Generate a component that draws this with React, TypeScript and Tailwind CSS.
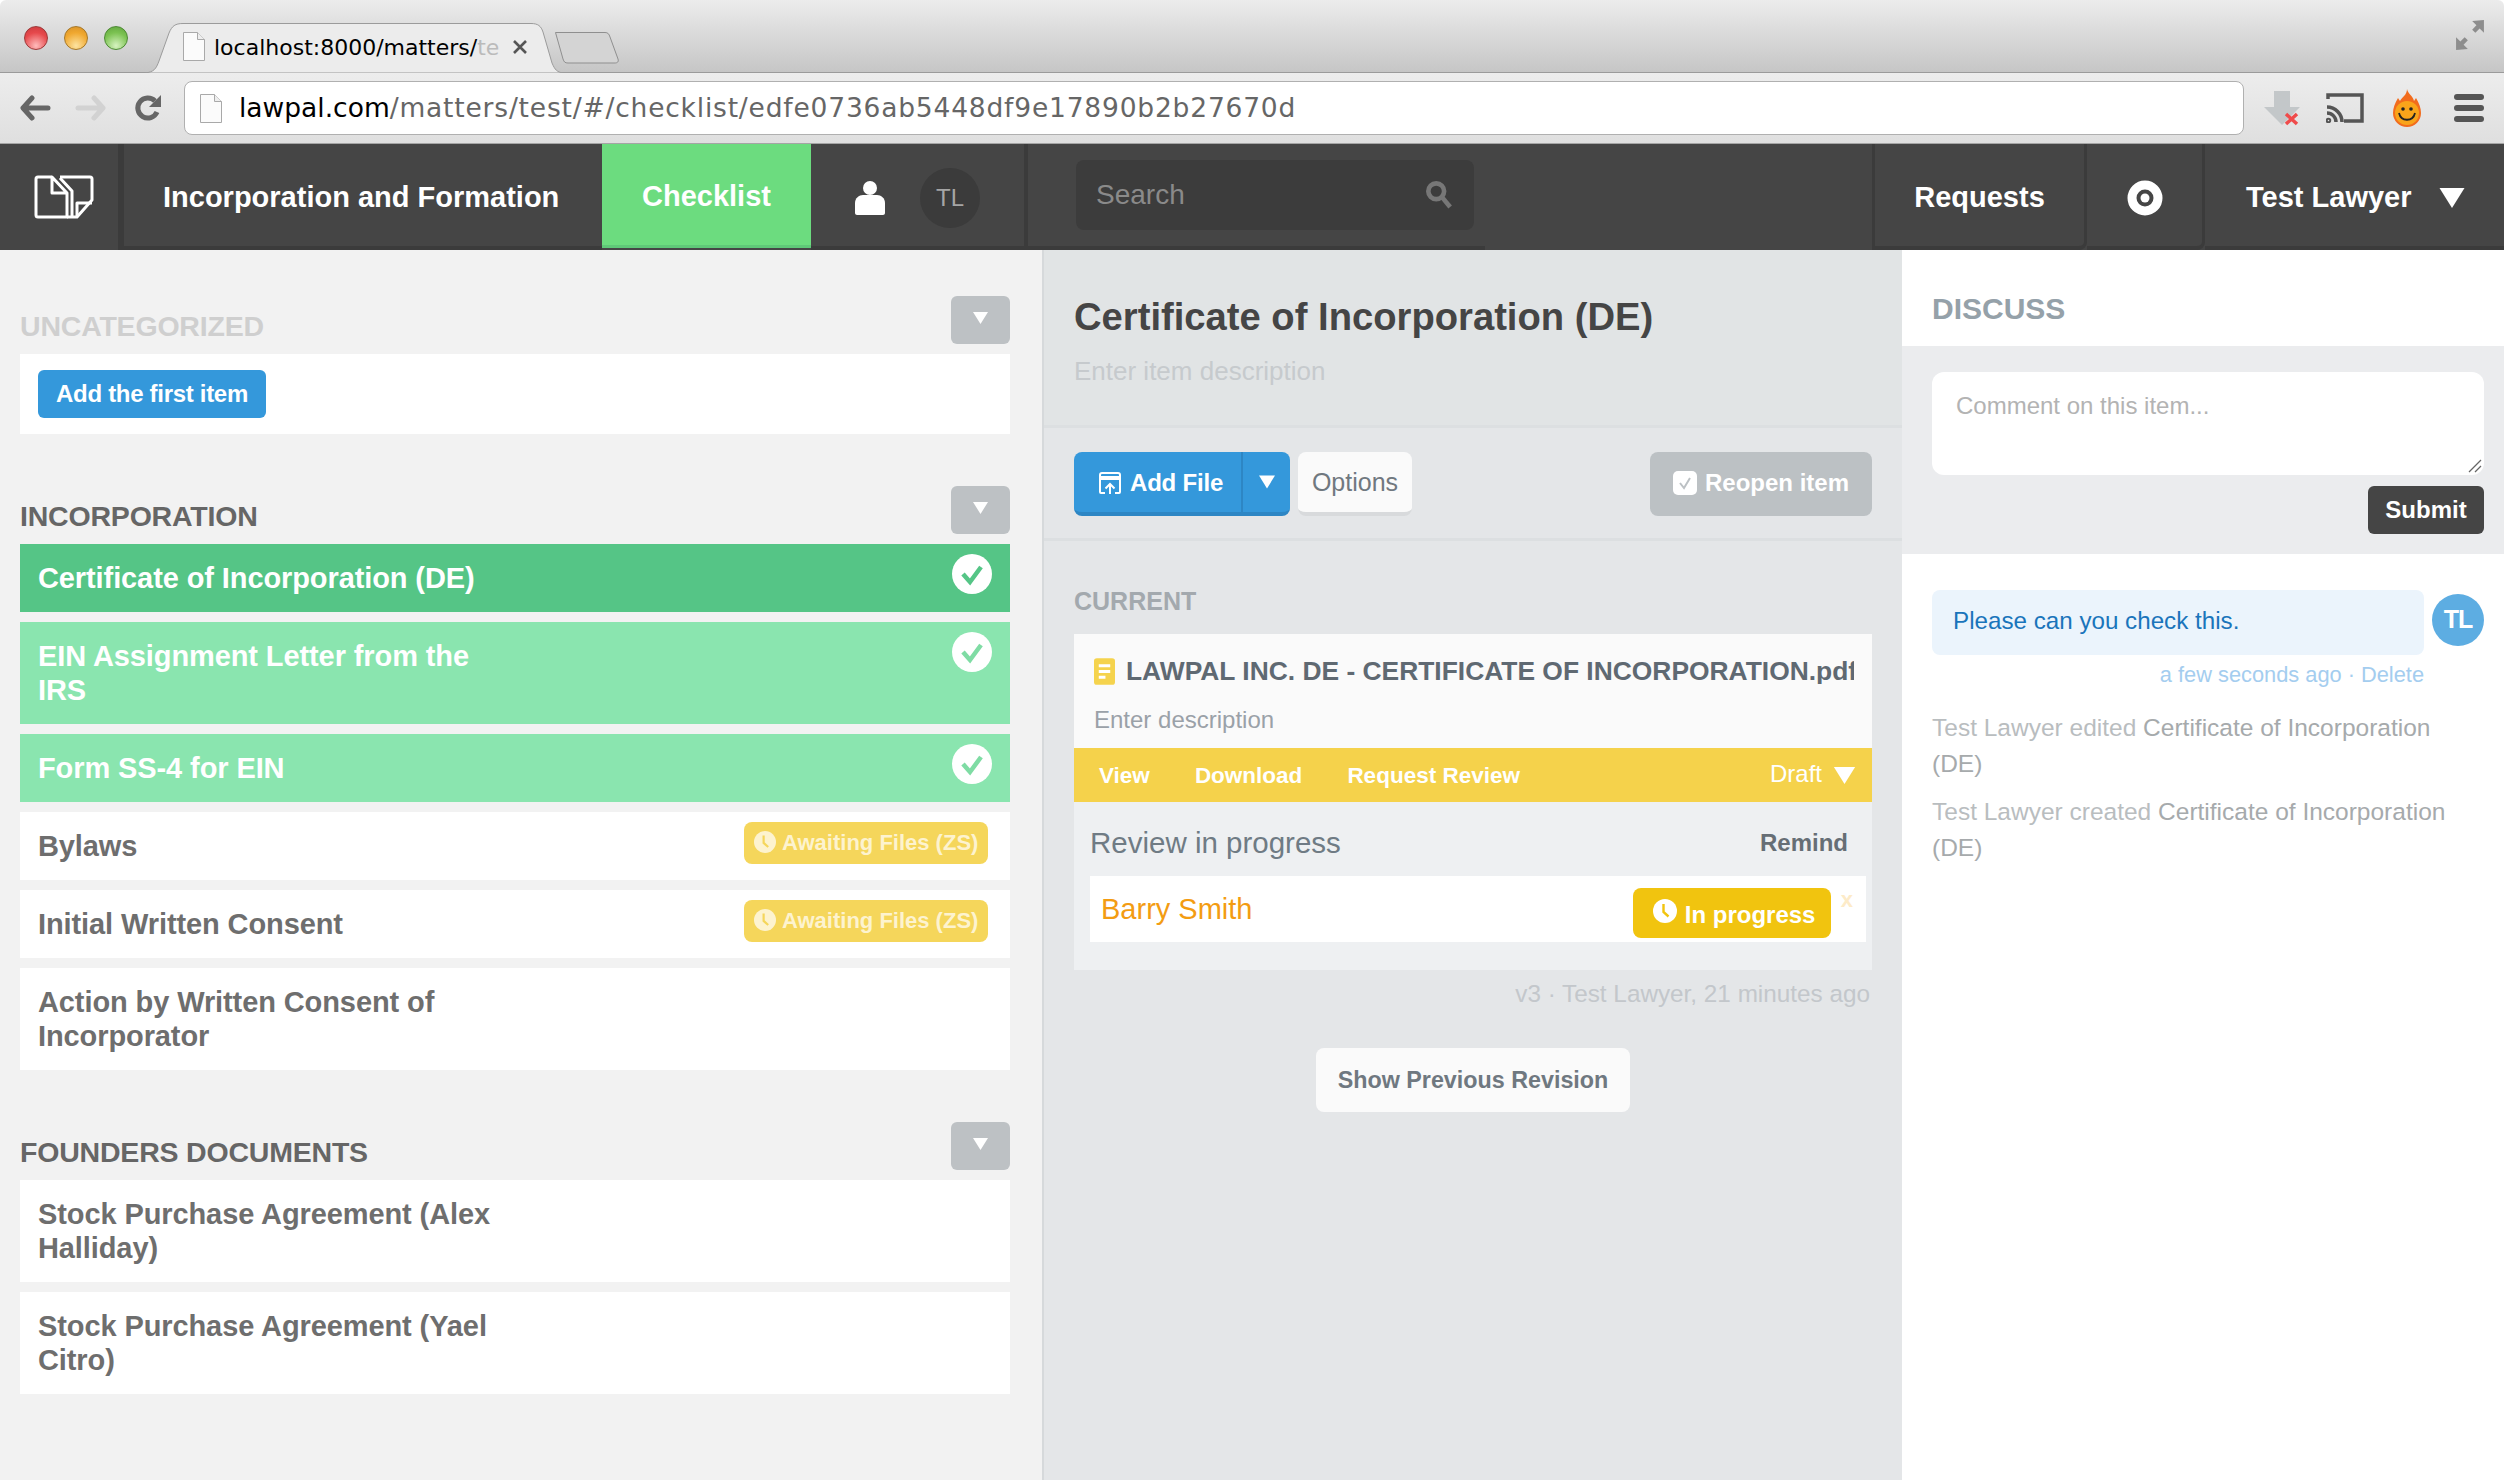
import React from "react";

const Caret = ({ className }: { className: string }) => (
  <svg viewBox="0 0 10 8" className={className} fill="currentColor">
    <path d="M0 0h10L5 8z" />
  </svg>
);

const PageIcon = ({ className }: { className: string }) => (
  <svg viewBox="0 0 22 29" className={className}>
    <path d="M.5.5h14l7 7v21H.5z" fill="#fbfbfb" stroke="#a9a9a9" />
    <path d="M14.5.5v7h7" fill="#eee" stroke="#a9a9a9" />
  </svg>
);

const ClockIcon = ({ className, hand }: { className: string; hand: string }) => (
  <svg viewBox="0 0 24 24" className={className}>
    <circle cx="12" cy="12" r="12" fill="currentColor" />
    <path d="M10.5 5v8l5 4.5" fill="none" stroke={hand} strokeWidth="2.4" />
  </svg>
);

const CheckCircle = ({ color }: { color: string }) => (
  <svg viewBox="0 0 40 40" className="w-10 h-10 shrink-0">
    <circle cx="20" cy="20" r="20" fill="#fff" />
    <path d="M11 20l7 8 11-15" fill="none" stroke={color} strokeWidth="4.5" />
  </svg>
);

function BrowserChrome() {
  return (
    <div className="font-['DejaVu_Sans',sans-serif]">
      <div className="h-[73px] flex bg-gradient-to-b from-[#ececec] to-[#c6c6c6] border-b border-[#9b9b9b] rounded-t-md">
        <div className="flex gap-4 pl-6 pt-[26px]">
          <span className="w-6 h-6 rounded-full border border-[#9c3a3a] bg-[radial-gradient(circle_at_50%_85%,#fbb_0%,#e6494c_60%,#c93a3d_100%)]" />
          <span className="w-6 h-6 rounded-full border border-[#a5782a] bg-[radial-gradient(circle_at_50%_85%,#fde3a0_0%,#f0a830_60%,#d58f26_100%)]" />
          <span className="w-6 h-6 rounded-full border border-[#4d8a35] bg-[radial-gradient(circle_at_50%_85%,#d6f3c0_0%,#7cc252_60%,#5ea33c_100%)]" />
        </div>
        <div className="relative ml-[17px] mt-[23px] w-[418px] h-[50px] flex items-center pl-[38px]">
          <svg viewBox="0 0 418 50" className="absolute inset-0 w-full h-full">
            <path d="M0 50C9 49 11 46 14 38L24 10C27 3 30 .5 38 .5H386C393 .5 396 3 398 9L407 40C410 47 412 49 418 50z" fill="#ececec" stroke="#9b9b9b" />
          </svg>
          <PageIcon className="relative w-[22px] h-[29px] shrink-0 mb-[3px]" />
          <span className="relative ml-[9px] text-[22px] leading-none text-black w-[290px] overflow-hidden whitespace-nowrap">
            localhost:8000/matters/<span className="text-[#bbb]">te</span>
          </span>
          <svg viewBox="0 0 14 14" className="relative w-[14px] h-[14px] ml-[9px] mb-[2px]">
            <path d="M1 1l12 12M13 1L1 13" stroke="#555" strokeWidth="2.6" />
          </svg>
        </div>
        <svg viewBox="0 0 64 32" className="w-16 h-8 -ml-[8px] mt-[32px]">
          <path d="M.5.5H50C53 .5 54 2 55 5L63 27C64 30 62 31 60 31H13C10 31 9 30 8 27z" fill="#d4d4d4" stroke="#8f8f8f" />
        </svg>
        <svg viewBox="0 0 28 28" className="w-[30px] h-[30px] ml-auto mr-[19px] mt-[20px]" fill="#8d8d8d">
          <path d="M27 0v12l-4-4-4 4-3-3 4-4-4-4zM1 28V16l4 4 4-4 3 3-4 4 4 4z" />
        </svg>
      </div>
      <div className="h-[71px] flex items-center bg-gradient-to-b from-[#ededed] to-[#dfdfdf] border-b border-[#a5a5a5]">
        <svg viewBox="0 0 31 26" className="w-[31px] h-[26px] ml-5" fill="none" stroke="#666" strokeWidth="5" strokeLinecap="round" strokeLinejoin="round">
          <path d="M12 3L3 13l9 10M4 13h24" />
        </svg>
        <svg viewBox="0 0 31 26" className="w-[31px] h-[26px] ml-6" fill="none" stroke="#d2d2d2" strokeWidth="5" strokeLinecap="round" strokeLinejoin="round">
          <path d="M19 3l9 10-9 10M3 13h24" />
        </svg>
        <svg viewBox="0 0 28 28" className="w-7 h-7 ml-7" fill="none">
          <path d="M23 18a10 10 0 1 1-2-11" stroke="#666" strokeWidth="5" />
          <path d="M27 1v12H15z" fill="#666" />
        </svg>
        <div className="w-[2060px] h-[54px] ml-[22px] rounded-lg bg-white border border-[#b0b0b0] flex items-center pl-[15px]">
          <PageIcon className="w-[22px] h-[29px]" />
          <span className="ml-[17px] text-[26.5px] leading-none whitespace-nowrap text-[#666] tracking-[0.8px]">
            <span className="text-black tracking-normal">lawpal.com</span>/matters/test/#/checklist/edfe0736ab5448df9e17890b2b27670d
          </span>
        </div>
        <svg viewBox="0 0 38 36" className="w-[38px] h-9 ml-[19px]">
          <path d="M11 1h16v16h10L19 35 1 17h10z" fill="#c3c7c9" />
          <path d="M23 24l11 10M34 24L23 34" stroke="#ef4b4b" strokeWidth="3.5" />
        </svg>
        <svg viewBox="0 0 38 30" className="w-[38px] h-[30px] ml-[25px]" fill="none" stroke="#555" strokeWidth="3.5">
          <path d="M2 6V2h34v26H18" />
          <path d="M1 14a15 15 0 0 1 15 15M1 20a9 9 0 0 1 9 9" />
          <circle cx="2.5" cy="27.5" r="1" />
        </svg>
        <svg viewBox="0 0 28 38" className="w-7 h-[38px] ml-[29px]">
          <path d="M14 0c1 5 6 7 7 12l2-3c3 5 5 10 5 15a14 14 0 0 1-28 0c0-5 2-10 5-15l2 3c2-4 7-6 7-12z" fill="#f26c1d" />
          <circle cx="14" cy="24" r="12" fill="#f9a41a" />
          <circle cx="10" cy="20" r="1.8" fill="#222" />
          <circle cx="18" cy="20" r="1.8" fill="#222" />
          <path d="M6 24c2 9 14 9 16 0" fill="none" stroke="#222" strokeWidth="1.8" />
        </svg>
        <div className="w-[30px] ml-[33px] flex flex-col gap-[5px]">
          <span className="h-[6px] rounded-full bg-[#555]" />
          <span className="h-[6px] rounded-full bg-[#555]" />
          <span className="h-[6px] rounded-full bg-[#555]" />
        </div>
      </div>
    </div>
  );
}

function TopNav() {
  const cell = "h-[106px] flex items-center pt-[6px] border-b-4 border-[#3b3b3b]";
  return (
    <div className="h-[106px] flex bg-[#454545] text-white font-bold text-[29px]">
      <div className="w-[118px] h-[106px] flex items-center pl-[34px]">
        <svg viewBox="-2 -2 60 44" className="w-[60px] h-11" fill="none" stroke="#fff" strokeWidth="3" strokeLinejoin="round">
          <path d="M16 0H2Q0 0 0 2V38Q0 40 2 40H31V16L16 0V16H31" />
          <path d="M24 0H54Q56 0 56 2V23L41 40H31" />
          <path d="M24 1L36 14V40" />
          <path d="M41 40V26H56" />
        </svg>
      </div>
      <div className={`${cell} w-[484px] border-l-[6px] pl-[39px]`}>Incorporation and Formation</div>
      <div className="w-[209px] h-[104px] flex items-center justify-center pt-[5px] bg-[#6cdc7f] border-b-[3px] border-[#5fc878]">Checklist</div>
      <div className={`${cell} w-[217px] border-r-4 pl-[44px]`}>
        <svg viewBox="0 0 30 34" className="w-[30px] h-[34px]" fill="#fff">
          <circle cx="15" cy="7" r="7" />
          <path d="M0 32V22c0-5 4-8 8-8h14c4 0 8 3 8 8v10c0 1-1 2-2 2H2c-1 0-2-1-2-2z" />
        </svg>
        <span className="ml-[35px] w-[60px] h-[60px] rounded-full bg-[#3b3b3b] text-[#a5a5a5] text-[24px] font-normal flex items-center justify-center">TL</span>
      </div>
      <div className="h-[106px] w-[457px] flex pl-[48px] pt-4 border-b-4 border-[#3b3b3b]">
        <div className="w-[398px] h-[70px] rounded-lg bg-[#3c3c3c] flex items-center justify-between pl-5 pr-[22px] font-normal text-[#8a8a8a] text-[28px]">
          Search
          <svg viewBox="0 0 28 30" className="w-[26px] h-7" fill="none" stroke="#777" strokeWidth="5">
            <circle cx="11" cy="11" r="8.5" />
            <path d="M17 17l9 11" />
          </svg>
        </div>
      </div>
      <div className="w-[387px]" />
      <div className={`${cell} w-[215px] border-l-[3px] border-r-[3px] justify-center rounded-br-lg`}>Requests</div>
      <div className={`${cell} w-[118px] border-r-[3px] justify-center rounded-br-lg`}>
        <svg viewBox="0 0 36 36" className="w-9 h-9">
          <circle cx="18" cy="18" r="13" fill="none" stroke="#fff" strokeWidth="9" />
          <circle cx="18" cy="18" r="4.5" fill="#fff" />
        </svg>
      </div>
      <div className={`${cell} flex-1 pl-[41px]`}>
        Test Lawyer
        <Caret className="w-[26px] h-[20px] ml-7" />
      </div>
    </div>
  );
}

function SectionHead({ title, muted }: { title: string; muted?: boolean }) {
  return (
    <div className="flex items-end justify-between h-12 mb-[10px]">
      <h2 className={`text-[28.5px] font-bold leading-none tracking-[-0.2px] mb-1 ${muted ? "text-[#cfcfcf]" : "text-[#666]"}`}>{title}</h2>
      <button className="w-[59px] h-12 rounded-md bg-[#bdc1c4] text-white flex items-center justify-center pb-1">
        <Caret className="w-[17px] h-3" />
      </button>
    </div>
  );
}

function Row({ label, tone, badge }: { label: string; tone?: "active" | "done"; badge?: boolean }) {
  const bg = tone === "active" ? "bg-[#55c586] text-white" : tone === "done" ? "bg-[#8ae5af] text-white" : "bg-white text-[#6e6e6e]";
  return (
    <div className={`flex justify-between pl-[18px] pr-[18px] py-[17px] min-h-[68px] text-[29px] leading-[34px] font-bold ${bg}`}>
      <span className="max-w-[460px] tracking-[-0.1px]">{label}</span>
      {tone && <span className="-my-[7px]"><CheckCircle color={tone === "active" ? "#55c586" : "#7fdca4"} /></span>}
      {badge && (
        <span className="-my-[7px] mr-1 h-[42px] w-[244px] rounded-lg bg-[#f5d65b] text-[#fdf3cf] text-[22px] leading-none flex items-center pl-[10px] gap-[6px] whitespace-nowrap">
          <ClockIcon className="w-[22px] h-[22px] shrink-0 mb-[2px]" hand="#f5d65b" />
          Awaiting Files (ZS)
        </span>
      )}
    </div>
  );
}

function LeftPanel() {
  return (
    <div className="w-[1042px] shrink-0 bg-[#f2f2f2] pl-5 pr-8 pt-[46px] flex flex-col gap-[52px]">
      <section>
        <SectionHead title="UNCATEGORIZED" muted />
        <div className="bg-white h-20 pl-[18px] pt-4">
          <button className="h-12 w-[228px] rounded-md bg-[#3498db] text-white font-bold text-[24px] tracking-[-0.3px]">Add the first item</button>
        </div>
      </section>
      <section>
        <SectionHead title="INCORPORATION" />
        <div className="flex flex-col gap-[10px]">
          <Row label="Certificate of Incorporation (DE)" tone="active" />
          <Row label="EIN Assignment Letter from the IRS" tone="done" />
          <Row label="Form SS-4 for EIN" tone="done" />
          <Row label="Bylaws" badge />
          <Row label="Initial Written Consent" badge />
          <Row label="Action by Written Consent of Incorporator" />
        </div>
      </section>
      <section>
        <SectionHead title="FOUNDERS DOCUMENTS" />
        <div className="flex flex-col gap-[10px]">
          <Row label="Stock Purchase Agreement (Alex Halliday)" />
          <Row label="Stock Purchase Agreement (Yael Citro)" />
        </div>
      </section>
    </div>
  );
}

function CenterPanel() {
  return (
    <div className="w-[860px] shrink-0 bg-[#e4e6e8] border-l-2 border-[#d6d9db] flex flex-col">
      <div className="h-[178px] shrink-0 bg-[#e1e4e5] border-b-[3px] border-[#dcdfe1] pl-[30px] pt-[44px]">
        <h1 className="text-[38.2px] leading-[46px] font-bold text-[#454545]">Certificate of Incorporation (DE)</h1>
        <p className="mt-4 text-[26px] leading-[30px] text-[#c6cacd]">Enter item description</p>
      </div>
      <div className="h-[113px] shrink-0 border-b-[3px] border-[#dcdfe1] pl-[30px] pr-[30px] flex items-start pt-6">
        <div className="flex h-16 rounded-lg bg-[#3498db] border-b-4 border-[#2d86c4] text-white text-[24px] font-bold">
          <div className="w-[169px] flex items-center pl-6 pt-[2px] gap-2 border-r-2 border-[#2d86c4] tracking-[-0.2px]">
            <svg viewBox="0 0 24 24" className="w-6 h-6" fill="none" stroke="#fff" strokeWidth="2">
              <path d="M2 21V4Q2 2 4 2H20Q22 2 22 4V21Q22 22 21 22H17M7 22H3Q2 22 2 21" />
              <path d="M2 7H22" strokeWidth="4" />
              <path d="M12 23V13M7.5 17.5L12 13L16.5 17.5" />
            </svg>
            Add File
          </div>
          <div className="w-[47px] flex items-center justify-center">
            <Caret className="w-[16px] h-[14px]" />
          </div>
        </div>
        <button className="ml-2 w-[114px] h-16 rounded-lg bg-[#fafafa] border-b-4 border-[#d8dadc] pt-[2px] text-[25px] text-[#70787f]">Options</button>
        <button className="ml-auto w-[222px] h-16 rounded-lg bg-[#bcc1c4] text-white text-[24px] font-bold flex items-center pl-[23px] pb-[2px] gap-2">
          <svg viewBox="0 0 24 24" className="w-6 h-6">
            <rect width="24" height="24" rx="5" fill="#fff" />
            <path d="M7 12l4 5 6-10" fill="none" stroke="#bcc1c4" strokeWidth="2" />
          </svg>
          Reopen item
        </button>
      </div>
      <div className="pl-[30px] pr-[30px]">
        <h3 className="mt-[45px] text-[25px] leading-[30px] font-bold text-[#a3a9ae]">CURRENT</h3>
        <div className="mt-[18px] bg-[#fafafa]">
          <div className="h-[114px] pl-5 pt-[19px] pr-[18px]">
            <div className="flex items-center gap-[11px] h-[36px]">
              <svg viewBox="0 0 22 28" className="w-[21px] h-[27px] shrink-0">
                <rect width="22" height="28" rx="3" fill="#f5d34d" />
                <path d="M5 8h12M5 14h12M5 20h7" stroke="#fff" strokeWidth="3" />
              </svg>
              <span className="text-[26.4px] leading-none font-bold text-[#5f6972] whitespace-nowrap overflow-hidden">LAWPAL INC. DE - CERTIFICATE OF INCORPORATION.pdf</span>
            </div>
            <p className="mt-[17px] text-[24px] leading-[28px] text-[#9aa1a8]">Enter description</p>
          </div>
          <div className="h-[54px] bg-[#f5d24b] text-white flex items-center pl-[25px] pr-[16px] pt-[2px] text-[22.5px] font-bold gap-[45px]">
            <span>View</span>
            <span>Download</span>
            <span>Request Review</span>
            <span className="ml-auto flex items-center gap-[11px] font-normal text-[24px] pb-[5px]">
              Draft
              <Caret className="w-[23px] h-[17px] mt-[4px]" />
            </span>
          </div>
          <div className="bg-[#eef0f2] h-[168px] pl-[16px] pr-[6px]">
            <div className="h-[74px] flex items-center justify-between pr-[18px] pt-[8px]">
              <span className="text-[29.5px] text-[#6f7b84]">Review in progress</span>
              <span className="text-[24px] font-bold text-[#666e75]">Remind</span>
            </div>
            <div className="h-[66px] bg-white flex items-start pl-[11px]">
              <span className="text-[29px] leading-[66px] text-[#f39c12]">Barry Smith</span>
              <span className="ml-auto mt-3 w-[198px] h-[50px] rounded-lg bg-[#f1c40f] text-white text-[24px] font-bold flex items-center pl-5 gap-2">
                <ClockIcon className="w-6 h-6 mb-1" hand="#f1c40f" />
                <span className="mt-[3px]">In progress</span>
              </span>
              <span className="ml-[10px] mr-[13px] mt-[9px] text-[22px] leading-[30px] font-bold text-[#fdebc8]">x</span>
            </div>
          </div>
        </div>
        <p className="mt-[10px] text-right pr-[2px] text-[24.3px] leading-[28px] text-[#c3c7cb]">v3 · Test Lawyer, 21 minutes ago</p>
        <div className="mt-[40px] flex justify-center">
          <button className="w-[314px] h-16 rounded-lg bg-[#fafafa] text-[23.3px] font-bold text-[#6f7880]">Show Previous Revision</button>
        </div>
      </div>
    </div>
  );
}

function RightPanel() {
  return (
    <div className="flex-1 bg-white">
      <h2 className="h-[96px] pl-[30px] pt-[41px] text-[30px] leading-[36px] font-bold text-[#95a1a9]">DISCUSS</h2>
      <div className="h-[208px] bg-[#ebecee] pl-[30px] pr-5 pt-[26px] flex flex-col">
        <div className="relative h-[103px] rounded-xl bg-white pl-[24px] pt-[19px] text-[24px] leading-[30px] text-[#b3b3b3]">
          Comment on this item...
          <svg viewBox="0 0 14 14" className="absolute right-[2px] bottom-[2px] w-[14px] h-[14px]" stroke="#666" strokeWidth="1.3">
            <path d="M1 13L13 1M7 13l6-6" />
          </svg>
        </div>
        <button className="self-end mt-[11px] w-[116px] h-12 rounded-md bg-[#454545] text-white text-[24px] font-bold">Submit</button>
      </div>
      <div className="pl-[30px] pr-5 pt-9">
        <div className="flex items-start gap-2">
          <div className="w-[492px] h-[65px] rounded-lg bg-[#ebf4fc] pl-[21px] pb-[2px] flex items-center text-[24.2px] text-[#1a75bb]">Please can you check this.</div>
          <div className="w-[52px] h-[52px] mt-1 rounded-full bg-[#5dade2] text-white text-[25px] font-bold tracking-[-1px] flex items-center justify-center">TL</div>
        </div>
        <p className="w-[492px] mt-[6px] text-right text-[21.8px] leading-[28px] text-[#a4cdef]">a few seconds ago · Delete</p>
        <p className="mt-[21px] max-w-[530px] text-[24.5px] leading-[35.5px] text-[#b9bdbf]">Test Lawyer edited <span className="text-[#a6aaac]">Certificate of Incorporation (DE)</span></p>
        <p className="mt-[13px] max-w-[530px] text-[24.5px] leading-[35.5px] text-[#b9bdbf]">Test Lawyer created <span className="text-[#a6aaac]">Certificate of Incorporation (DE)</span></p>
      </div>
    </div>
  );
}

export default function App() {
  return (
    <div className="w-[2504px] h-[1484px] overflow-hidden bg-white font-['Liberation_Sans',Arial,sans-serif]">
      <BrowserChrome />
      <TopNav />
      <div className="h-[1230px] flex">
        <LeftPanel />
        <CenterPanel />
        <RightPanel />
      </div>
    </div>
  );
}
